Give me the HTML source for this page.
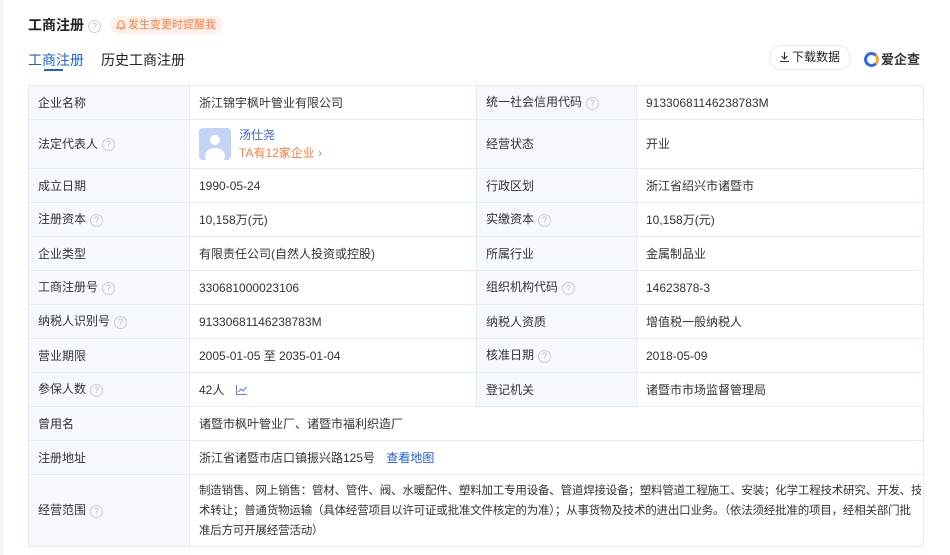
<!DOCTYPE html>
<html><head><meta charset="utf-8"><style>
*{margin:0;padding:0;box-sizing:border-box}
body{width:950px;height:555px;background:#fff;font-family:"Liberation Sans","Noto Sans CJK SC",sans-serif;color:#333;font-size:12px;position:relative;overflow:hidden}
.strip{position:absolute;left:0;top:0;width:3px;height:555px;background:#f1f4f9}
.title{position:absolute;left:28px;top:15px;font-size:14px;font-weight:bold;color:#222}
.q{display:inline-block;width:13px;height:13px;border:1px solid #ccc;border-radius:50%;color:#bbb;font-size:9px;line-height:11px;text-align:center;font-weight:normal;vertical-align:middle;margin-left:4px}
.remind{position:absolute;left:110px;top:16px;height:18px;padding:0 7px 0 6px;background:#fff1ea;border-radius:9px;color:#ff7a3d;font-size:11px;line-height:18px}
.remind svg{vertical-align:-2px;margin-right:2px}
.tab1{position:absolute;left:28px;top:50px;font-size:14px;color:#1e5fe6}
.tab1u{position:absolute;left:44px;top:69px;width:19px;height:2px;background:#1e5fe6}
.tab2{position:absolute;left:101px;top:50px;font-size:14px;color:#222}
.dl{position:absolute;left:769px;top:45px;width:82px;height:25px;border:1px solid #e6e9f0;border-radius:13px;font-size:12px;line-height:23px;text-align:center;color:#222}
.dl svg{vertical-align:-1px;margin-right:3px}
.logo{position:absolute;left:864px;top:49px;font-size:13px;font-weight:bold;color:#333}
.logo i{display:inline-block;width:15px;height:15px;border-radius:50%;border:3px solid #2d6cf0;border-right-color:#f5a623;vertical-align:-3px;margin-right:2px}
table{position:absolute;left:28px;top:85px;width:895px;border-collapse:collapse;table-layout:fixed}
td{border:1px solid #e4ecf7;padding:0 9px;height:34px;vertical-align:middle;line-height:14px}
td.l{background:#f5f8fc}
td.l2{background:#f5f8fc}
a{color:#1e5fe6;text-decoration:none}
.av{display:inline-block;width:32px;height:32px;border-radius:4px;background:#c3d4f6;vertical-align:middle;position:relative;overflow:hidden}
.av:before{content:"";position:absolute;left:11px;top:7px;width:10px;height:10px;border-radius:50%;background:#fff}
.av:after{content:"";position:absolute;left:6px;top:20px;width:20px;height:16px;border-radius:50%;background:#fff}
.scope{width:722px;overflow:hidden;white-space:nowrap;line-height:20px;font-size:11.5px;letter-spacing:-0.2px}
</style></head><body>
<div class="strip"></div>
<div class="title">工商注册<span class="q">?</span></div>
<div class="remind"><svg width="10" height="11" viewBox="0 0 10 11"><path d="M2 8V5a3 3 0 0 1 6 0v3l1 1H1z M4 10h2" fill="none" stroke="#ff7a3d" stroke-width="1.1"/></svg>发生变更时提醒我</div>
<div class="tab1">工商注册</div><div class="tab1u"></div>
<div class="tab2">历史工商注册</div>
<div class="dl"><svg width="9" height="10" viewBox="0 0 9 10"><path d="M4.5 0v7M1.5 4l3 3 3-3M0 9.5h9" fill="none" stroke="#333" stroke-width="1.1"/></svg>下载数据</div>
<div class="logo"><i></i>爱企查</div>
<table>
<colgroup><col style="width:161px"><col style="width:287px"><col style="width:160px"><col style="width:287px"></colgroup>
<tr><td class="l" style="height:32px">企业名称</td><td>浙江锦宇枫叶管业有限公司</td><td class="l2">统一社会信用代码<span class="q">?</span></td><td>91330681146238783M</td></tr>
<tr><td class="l" style="height:49px">法定代表人<span class="q">?</span></td><td><span class="av"></span><span style="display:inline-block;vertical-align:middle;margin-left:8px;line-height:18px"><a style="color:#3a5fd9">汤仕尧</a><br><span style="color:#ff7a3d">TA有12家企业 ›</span></span></td><td class="l2">经营状态</td><td>开业</td></tr>
<tr><td class="l">成立日期</td><td>1990-05-24</td><td class="l2">行政区划</td><td>浙江省绍兴市诸暨市</td></tr>
<tr><td class="l">注册资本<span class="q">?</span></td><td>10,158万(元)</td><td class="l2">实缴资本<span class="q">?</span></td><td>10,158万(元)</td></tr>
<tr><td class="l">企业类型</td><td>有限责任公司(自然人投资或控股)</td><td class="l2">所属行业</td><td>金属制品业</td></tr>
<tr><td class="l">工商注册号<span class="q">?</span></td><td>330681000023106</td><td class="l2">组织机构代码<span class="q">?</span></td><td>14623878-3</td></tr>
<tr><td class="l">纳税人识别号<span class="q">?</span></td><td>91330681146238783M</td><td class="l2">纳税人资质</td><td>增值税一般纳税人</td></tr>
<tr><td class="l">营业期限</td><td>2005-01-05 至 2035-01-04</td><td class="l2">核准日期<span class="q">?</span></td><td>2018-05-09</td></tr>
<tr><td class="l" style="height:32px">参保人数<span class="q">?</span></td><td>42人 <svg style="margin-left:8px;vertical-align:-1px" width="11" height="10" viewBox="0 0 11 10"><path d="M0.5 0v9.5H11M2.5 7l2.5-3 2 2 3.5-4" fill="none" stroke="#5b7fe6" stroke-width="1.1"/></svg></td><td class="l2">登记机关</td><td>诸暨市市场监督管理局</td></tr>
<tr><td class="l">曾用名</td><td colspan="3">诸暨市枫叶管业厂、诸暨市福利织造厂</td></tr>
<tr><td class="l">注册地址</td><td colspan="3">浙江省诸暨市店口镇振兴路125号 <a style="margin-left:8px">查看地图</a></td></tr>
<tr><td class="l" style="height:72px">经营范围<span class="q">?</span></td><td colspan="3"><div class="scope">制造销售、网上销售：管材、管件、阀、水暖配件、塑料加工专用设备、管道焊接设备；塑料管道工程施工、安装；化学工程技术研究、开发、技<br>术转让；普通货物运输（具体经营项目以许可证或批准文件核定的为准）；从事货物及技术的进出口业务。（依法须经批准的项目，经相关部门批<br>准后方可开展经营活动）</div></td></tr>
</table>
</body></html>
